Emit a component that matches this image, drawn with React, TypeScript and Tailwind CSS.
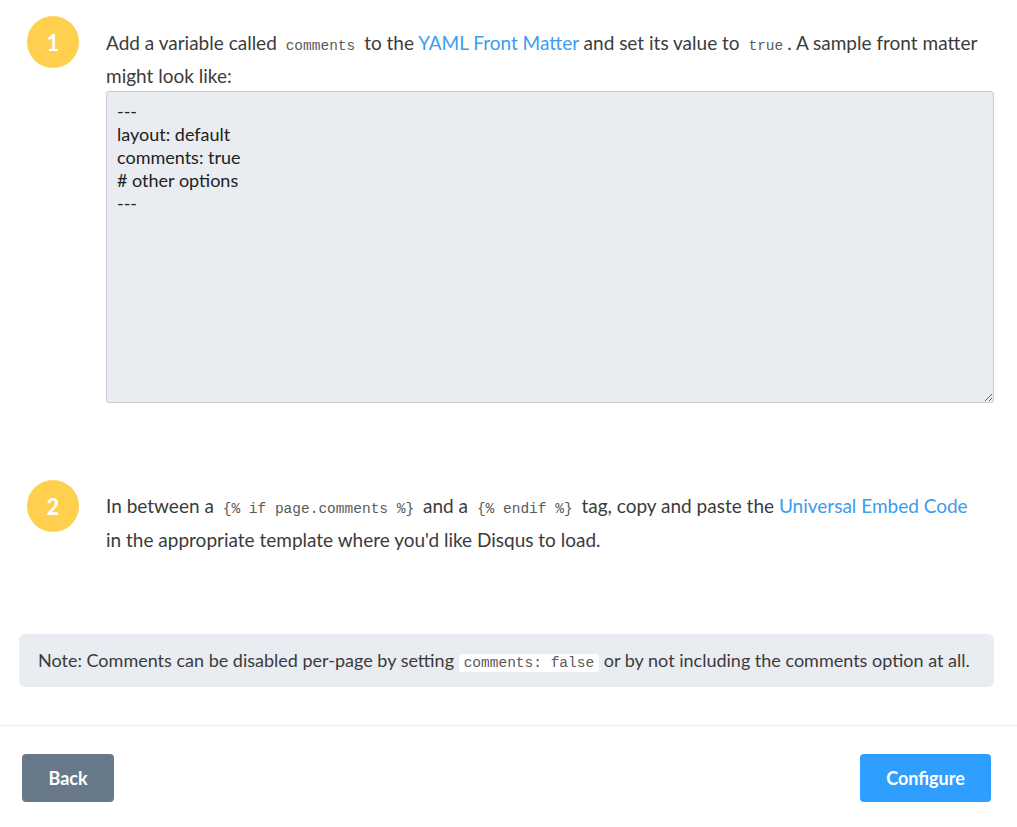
const Code = ({ children }: { children: React.ReactNode }) => (
    <code className="px-[4px] font-['Liberation_Mono',monospace] text-[14.5px] leading-none text-[#5a5a5a]">{children}</code>
)

const Step = ({ n }: { n: number }) => (
    <div className="ml-2 flex h-[52px] w-[52px] shrink-0 items-center justify-center rounded-full bg-[#ffd04e] text-[22px] font-bold text-white">
        {n}
    </div>
)

export default function App() {
    return (
        <div className="min-h-[827px] bg-white font-['Lato',sans-serif] text-[#3b3b3b]">
            <div className="px-[19px] pt-4">
                <div className="flex gap-[27px]">
                    <Step n={1} />
                    <div className="flex-1 pr-[4px]">
                        <p className="pt-[10px] text-[19px] leading-[33px]">
                            Add a variable called <Code>comments</Code> to the{' '}
                            <a className="text-[#3d9bf0]">YAML Front Matter</a> and set its value to{' '}
                            <Code>true</Code>. A sample front matter might look like:
                        </p>
                        <textarea
                            readOnly
                            className="mt-[-1px] block h-[312px] w-full rounded-[3px] border border-[#c9cdd3] bg-[#e9ecf1] px-[10px] pt-[8px] pb-[10px] text-[18px] leading-[23px] text-[#222] outline-none"
                            defaultValue={'---\nlayout: default\ncomments: true\n# other options\n---'}
                        />
                    </div>
                </div>

                <div className="mt-[77px] flex gap-[27px]">
                    <Step n={2} />
                    <p className="flex-1 pt-[9px] pr-[16px] text-[19px] leading-[34px]">
                        In between a <Code>{'{% if page.comments %}'}</Code> and a <Code>{'{% endif %}'}</Code> tag,
                        copy and paste the <a className="text-[#3d9bf0]">Universal Embed Code</a> in the appropriate
                        template where you'd like Disqus to load.
                    </p>
                </div>

                <div className="mt-[77px] mr-[4px] flex h-[53px] items-center rounded-md bg-[#e9ecf1] px-[19px] text-[18px]">
                    <span>
                        Note: Comments can be disabled per-page by setting{' '}
                        <code className="rounded-[3px] bg-white px-[5px] py-[1px] font-['Liberation_Mono',monospace] text-[14.5px] leading-none text-[#5a5a5a]">
                            comments: false
                        </code>{' '}
                        or by not including the comments option at all.
                    </span>
                </div>
            </div>

            <div className="mt-[38px] border-t border-[#ececec]" />

            <div className="flex justify-between px-[22px] pt-[28px] pb-6">
                <button className="h-12 w-[92px] rounded bg-[#687a8a] text-[18px] font-bold text-white">Back</button>
                <button className="mr-[4px] h-12 w-[131px] rounded bg-[#2e9fff] text-[18px] font-bold text-white">
                    Configure
                </button>
            </div>
        </div>
    )
}
